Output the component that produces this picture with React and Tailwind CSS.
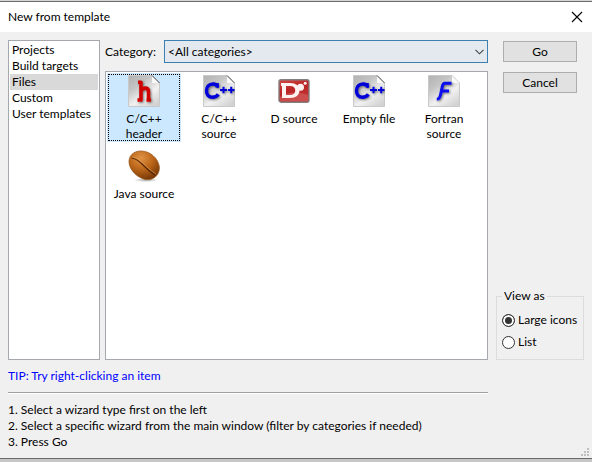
import { useState } from "react";

const groups = ["Projects", "Build targets", "Files", "Custom", "User templates"];

function Page({ children, id, folded = true }) {
  return (
    <svg viewBox="0 0 32 32" className="size-8" aria-hidden="true">
      <defs>
        <linearGradient id={`${id}-g`} x1="0.1" y1="0" x2="0.8" y2="1">
          <stop offset="0" stopColor="#b4b4b4" />
          <stop offset="0.3" stopColor="#c4c4c4" />
          <stop offset="0.65" stopColor="#f1f1f1" />
          <stop offset="1" stopColor="#d2d2d2" />
        </linearGradient>
        <filter id={`${id}-s`} x="-30%" y="-30%" width="160%" height="160%">
          <feDropShadow dx="1" dy="1" stdDeviation="0.9" floodColor="#333" floodOpacity="0.65" />
        </filter>
      </defs>
      <path d="M0.5 0.5H24L31.5 8V31.5H0.5Z" fill={`url(#${id}-g)`} stroke="#c9c9c9" strokeWidth="1" />
      <path d="M24 0.5V8H31.5Z" fill="#fafafa" />
      <path d="M24 0.5L31.5 8" stroke={folded ? "#333" : "#d8d8d8"} strokeWidth="0.9" />
      <g filter={`url(#${id}-s)`}>{children}</g>
    </svg>
  );
}

function HeaderIcon() {
  return (
    <Page id="header">
      <path d="M10 7.3H13V25M9.5 25H14.5M13 16C14.5 12.5 20.5 11.5 20.5 17V25M18.5 25H23" fill="none" stroke="#cf0000" strokeWidth="3.6" strokeLinejoin="round" />
    </Page>
  );
}

function CppIcon({ id }) {
  return (
    <Page id={id}>
      <path d="M14.8 8V13" fill="none" stroke="#0000d8" strokeWidth="2" />
      <path d="M14.6 12.2C14 10 12.3 9 10 9C5.8 9 3.5 12 3.5 15.8C3.5 19.8 5.8 22.3 9.5 22.3C12 22.3 14 21.3 15.3 19.3" fill="none" stroke="#0000d8" strokeWidth="3.4" />
      <path d="M17 15H24M20.5 11.8V18.2M25 15H31.5M28.2 11.8V18.2" fill="none" stroke="#0000d8" strokeWidth="2" />
    </Page>
  );
}

function FortranIcon() {
  return (
    <Page id="fortran" folded={false}>
      <path d="M23.5 8.3H17C14.5 8.3 14.5 10.5 14 13L12.6 19.5C12 22.5 11.5 24.2 8.8 24.2M12 16H21" fill="none" stroke="#0808ee" strokeWidth="3" strokeLinejoin="round" />
    </Page>
  );
}

function DIcon() {
  return (
    <svg viewBox="0 0 32 32" className="size-8" aria-hidden="true">
      <defs>
        <linearGradient id="d-g" x1="0" y1="0" x2="0.5" y2="1">
          <stop offset="0" stopColor="#d24a48" />
          <stop offset="0.5" stopColor="#bb2424" />
          <stop offset="1" stopColor="#bf3434" />
        </linearGradient>
      </defs>
      <rect x="1" y="4.8" width="30" height="22.4" rx="2" fill="url(#d-g)" stroke="#858080" strokeWidth="1.4" />
      <path d="M2 22C12 16 22 17 30 20V26H2Z" fill="#d96a66" opacity="0.5" />
      <path fillRule="evenodd" d="M3 8H12C18 8 21.5 11 21.5 15.5C21.5 20 18 23 12 23H4V11H3ZM8 11V20H12C15.5 20 17.3 18.2 17.3 15.5C17.3 12.8 15.5 11 12 11Z" fill="#fff2f0" />
      <circle cx="22.5" cy="12.3" r="3.5" fill="#fff2f0" />
      <circle cx="27.2" cy="8.2" r="1.5" fill="#fff2f0" />
    </svg>
  );
}

function BeanIcon() {
  return (
    <svg viewBox="0 0 32 32" className="size-8" aria-hidden="true">
      <defs>
        <radialGradient id="bean-g" cx="0.4" cy="0.25" r="0.75">
          <stop offset="0" stopColor="#e09245" />
          <stop offset="0.5" stopColor="#bd681a" />
          <stop offset="1" stopColor="#7a3a08" />
        </radialGradient>
        <radialGradient id="bean-s">
          <stop offset="0" stopColor="#777" stopOpacity="0.7" />
          <stop offset="1" stopColor="#777" stopOpacity="0" />
        </radialGradient>
      </defs>
      <ellipse cx="18" cy="30" rx="12" ry="2" fill="url(#bean-s)" />
      <path d="M1 11C1.5 4 7.5 0.8 13.5 1C22 1.3 30 8 31.3 16.5C32 23 27.5 29.3 20.5 29.6C11 30 0.5 20 1 11Z" fill="url(#bean-g)" stroke="#9a5a20" strokeWidth="0.8" />
      <path d="M3.5 8C8 8.5 11 11 14.5 14.5C18.5 18.5 22 22 27.5 25" fill="none" stroke="#552504" strokeWidth="1.2" />
      <path d="M4.3 7C9 7.5 12 10 15.5 13.5C19.5 17.5 23 21 28.2 24" fill="none" stroke="#e9a660" strokeWidth="0.8" opacity="0.7" />
    </svg>
  );
}

const templates = [
  { name: "C/C++ header", icon: <HeaderIcon /> },
  { name: "C/C++ source", icon: <CppIcon id="source" /> },
  { name: "D source", icon: <DIcon /> },
  { name: "Empty file", icon: <CppIcon id="empty" /> },
  { name: "Fortran source", icon: <FortranIcon /> },
  { name: "Java source", icon: <BeanIcon /> },
];

function PushButton({ children }) {
  return (
    <button type="button" className="h-[21px] border border-[#adadad] bg-[#e1e1e1] text-center leading-[19px]">
      {children}
    </button>
  );
}

function ViewOption({ label, value, view, onChange }) {
  return (
    <label className="flex items-center gap-[3px] whitespace-nowrap">
      <input
        type="radio"
        name="view"
        value={value}
        checked={view === value}
        onChange={() => onChange(value)}
        className="size-[13px] shrink-0 appearance-none rounded-full border border-[#333] bg-white checked:bg-[#333] checked:shadow-[inset_0_0_0_2px_white]"
      />
      {label}
    </label>
  );
}

export default function App() {
  const [group, setGroup] = useState("Files");
  const [selected, setSelected] = useState("C/C++ header");
  const [view, setView] = useState("large");

  return (
    <div className="flex min-h-screen flex-col border-t border-[#d5d5d5] bg-[#c6c6c6] pb-[3px] font-['Lato','Noto_Sans',sans-serif] text-[12px] leading-4 text-black">
      <div className="flex flex-1 flex-col border-y border-[#6b6b6b] bg-[#f0f0f0]">
        <header className="flex h-[30px] items-center justify-between bg-white pr-[9px] pl-2">
          <h1>New from template</h1>
          <button type="button" aria-label="Close">
            <svg viewBox="0 0 12 12" className="size-3" aria-hidden="true">
              <path d="M1 1L11 11M11 1L1 11" stroke="#000" strokeWidth="1.1" />
            </svg>
          </button>
        </header>

        <main className="flex flex-1 px-2 pt-2">
          <nav aria-label="Template groups" className="w-[92px] shrink-0 border border-[#a5a8ad] bg-white p-px">
            {groups.map((name) => (
              <button
                key={name}
                type="button"
                onClick={() => setGroup(name)}
                className={`block h-4 w-full pl-0.5 text-left whitespace-nowrap ${name === group ? "bg-[#d9d9d9]" : ""}`}
              >
                {name}
              </button>
            ))}
          </nav>

          <section className="ml-[5px] flex min-w-0 flex-1 flex-col gap-2">
            <div className="flex items-center">
              <label htmlFor="category" className="w-[59px] shrink-0">Category:</label>
              <div className="relative h-[23px] flex-1">
                <select id="category" className="h-full w-full appearance-none border border-[#3c7fb1] bg-[#e3e9ef] px-[3px]">
                  <option>&lt;All categories&gt;</option>
                </select>
                <svg viewBox="0 0 9 6" className="pointer-events-none absolute top-[9px] right-1 h-1.5 w-[9px]" aria-hidden="true">
                  <path d="M0.5 0.8L4.5 4.8L8.5 0.8" fill="none" stroke="#444" strokeWidth="1.1" />
                </svg>
              </div>
            </div>
            <div className="flex flex-1 flex-wrap content-start gap-x-px border border-[#a5a8ad] bg-white p-px">
              {templates.map(({ name, icon }) => (
                <div key={name} className="h-[75px] w-[74px]">
                  <button
                    type="button"
                    onClick={() => setSelected(name)}
                    className={`flex h-[69px] w-full flex-col items-center pt-0.5 leading-[15px] ${name === selected ? "bg-[#cce8ff] outline-1 -outline-offset-2 outline-dotted outline-black" : ""}`}
                  >
                    {icon}
                    <span className="mt-1 px-[5px]">{name}</span>
                  </button>
                </div>
              ))}
            </div>
          </section>

          <aside className="ml-2 flex w-[88px] shrink-0 flex-col justify-between">
            <div className="flex flex-col gap-2.5 px-[7px] pt-px">
              <PushButton>Go</PushButton>
              <PushButton>Cancel</PushButton>
            </div>
            <fieldset className="flex h-[72px] min-w-0 flex-col border border-[#dcdcdc] px-[5px]">
              <legend className="px-0.5">View as</legend>
              <div className="flex flex-col gap-1.5 pt-2">
                <ViewOption label="Large icons" value="large" view={view} onChange={setView} />
                <ViewOption label="List" value="list" view={view} onChange={setView} />
              </div>
            </fieldset>
          </aside>
        </main>

        <footer className="flex items-end justify-between pt-2 pr-[3px] pl-2">
          <div className="min-w-0 flex-1">
            <p className="text-[#0000ff]">TIP: Try right-clicking an item</p>
            <hr className="mt-2 h-0.5 border-t border-b border-t-[#a0a0a0] border-b-white" />
            <ol className="mt-2 mb-2 list-none">
              <li>1. Select a wizard type first on the left</li>
              <li>2. Select a specific wizard from the main window (filter by categories if needed)</li>
              <li>3. Press Go</li>
            </ol>
          </div>
          <svg viewBox="0 0 8 8" className="mb-0.5 ml-[93px] size-2 shrink-0" aria-hidden="true">
            <path d="M6 0h2v2h-2zM3 3h2v2h-2zM6 3h2v2h-2zM0 6h2v2h-2zM3 6h2v2h-2zM6 6h2v2h-2z" fill="#bfbfbf" />
          </svg>
        </footer>
      </div>
    </div>
  );
}
